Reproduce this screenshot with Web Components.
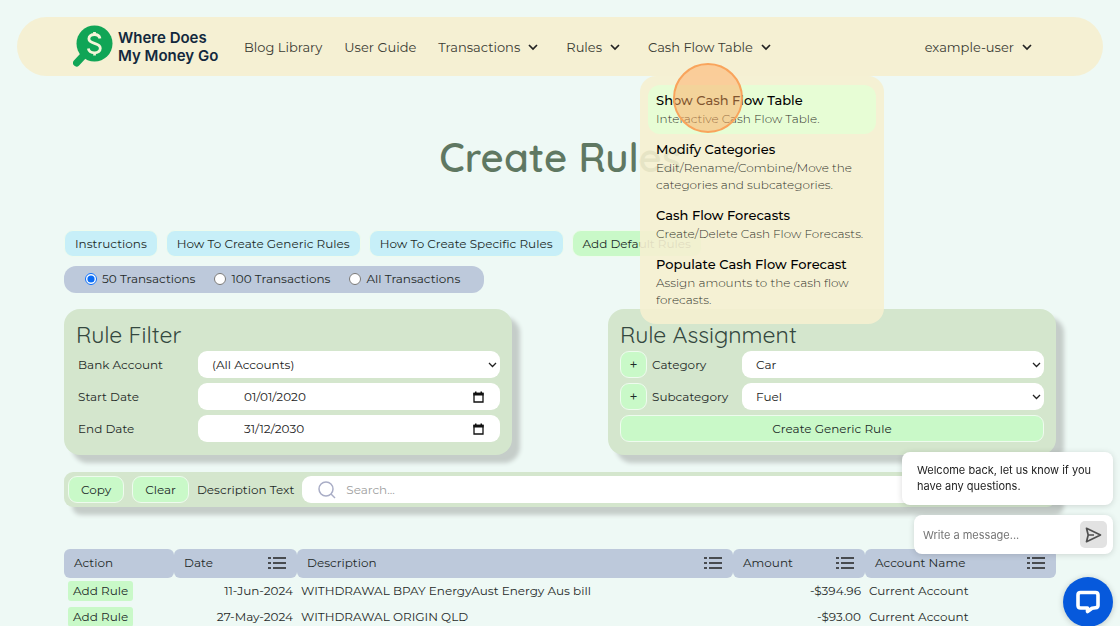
<!DOCTYPE html>
<html lang="en-AU">
<head>
<meta charset="utf-8">
<meta name="viewport" content="width=device-width, initial-scale=1">
<title>Create Rules</title>
<style>
  html { scrollbar-width: none; }
  body {
    margin: 0;
    background: #eef9f5;
    color: #1f2a28;
    font: 12px/20px Montserrat, Inter, "Open Sans", sans-serif;
  }
</style>
</head>
<body>
<rules-page></rules-page>

<template id="site-header">
  <style>
    :host { display: block; padding: 17px 17px 0; position: relative; z-index: 2; }
    header { display: flex; height: 59px; padding: 0 65px 0 56px; border-radius: 30px; background: #f5f0d3; }
    .logo { display: flex; align-items: center; gap: 5px; width: 171px; color: #12283d; text-decoration: none; font: 600 15px/18px Inter, sans-serif; white-space: nowrap; }
    .logo svg { flex: none; width: 40px; height: 43px; }
    nav { display: flex; flex: 1; gap: 22px; }
    .user { margin-left: auto; }
  </style>
  <header>
    <a class="logo" href="#">
      <svg viewBox="0 0 40 43" aria-hidden="true">
        <path d="M10 31 3.500 38" stroke="#10a556" stroke-width="7" stroke-linecap="round"/>
        <circle cx="21.500" cy="18.500" r="18" fill="#10a556"/>
        <path d="M27 13.500C26.300 10.500 24 9.500 21.500 9.500c-3.300 0-5.600 1.700-5.600 4.300 0 6 11.400 3.200 11.400 9.500 0 2.800-2.400 4.500-5.800 4.500-3.300 0-5.600-1.500-6.200-4.300M21.500 7v3M21.500 27v3.500" fill="none" stroke="#f5f5d8" stroke-width="2.800"/>
      </svg>
      <span>Where Does<br>My Money Go</span>
    </a>
    <nav>
      <nav-item>Blog Library</nav-item>
      <nav-item>User Guide</nav-item>
      <nav-item drop>Transactions</nav-item>
      <nav-item drop>Rules</nav-item>
      <nav-item drop>Cash Flow Table<cash-menu slot="menu"></cash-menu></nav-item>
      <nav-item drop class="user">example-user</nav-item>
    </nav>
  </header>
</template>

<template id="nav-item">
  <style>
    :host { display: flex; position: relative; align-items: stretch; }
    :host([drop]) { padding-right: 6px; }
    a, button { display: flex; align-items: center; gap: 8px; padding: 0; border: 0; background: none; color: #3b3c34; font: inherit; font-size: 13px; text-decoration: none; white-space: nowrap; cursor: pointer; }
    svg { width: 10px; height: 10px; fill: none; stroke: #222; stroke-width: 1.700; }
    ::slotted([slot=menu]) { position: absolute; top: 100%; left: -8px; }
  </style>
</template>

<template id="cash-menu">
  <style>
    :host { display: block; box-sizing: border-box; width: 244px; padding: 9px 8px; border-radius: 16px; background: rgba(245, 239, 208, .9); }
    .click { position: absolute; left: 33px; top: -13px; width: 70px; height: 70px; box-sizing: border-box; border: 2px solid #f9a45c; border-radius: 50%; background: rgba(255, 170, 95, .5); pointer-events: none; }
  </style>
  <menu-entry active><span slot="title">Show Cash Flow Table</span>Interactive Cash Flow Table.</menu-entry>
  <menu-entry><span slot="title">Modify Categories</span>Edit/Rename/Combine/Move the categories and subcategories.</menu-entry>
  <menu-entry><span slot="title">Cash Flow Forecasts</span>Create/Delete Cash Flow Forecasts.</menu-entry>
  <menu-entry><span slot="title">Populate Cash Flow Forecast</span>Assign amounts to the cash flow forecasts.</menu-entry>
  <div class="click"></div>
</template>

<template id="menu-entry">
  <style>
    :host { display: block; border-radius: 12px; }
    :host([active]) { background: #e7fdd5; }
    a { display: block; padding: 5px 8px 7px; color: #33342c; text-decoration: none; font-size: 12px; font-weight: 300; line-height: 17px; }
    strong { display: block; color: #000; font-size: 13px; font-weight: 500; line-height: 20px; }
  </style>
  <a href="#"><strong><slot name="title"></slot></strong><slot></slot></a>
</template>

<template id="ui-button">
  <style>
    :host { display: block; --bg: #c9f9c8; }
    :host([tone=info]) { --bg: #c7eff8; }
    button { box-sizing: border-box; width: 100%; height: 27px; padding: 0 var(--pad, 10px); border: 1px solid #eefbee; border-radius: 9px; background: var(--bg); color: #1d2b28; font: inherit; white-space: nowrap; cursor: pointer; }
    :host([square]) button { width: 27px; padding: 0; font-size: 14px; }
    :host([small]) button { display: block; width: auto; height: 20px; padding: 0 5px; border: 0; border-radius: 3px; line-height: 20px; }
  </style>
  <button type="button"><slot></slot></button>
</template>

<template id="rule-card">
  <style>
    :host { display: block; padding: 12px 12px 13px; border-radius: 16px; background: #d4e6cd; box-shadow: 8px 8px 4px #c5cdc9; }
    h2 { margin: 0 0 3px; color: #34483f; font-family: Quicksand, Inter, sans-serif; font-size: 23px; font-weight: 400; line-height: 27px; }
    .rows { display: grid; gap: 5px; }
  </style>
  <h2><slot name="title"></slot></h2>
  <div class="rows"><slot></slot></div>
</template>

<template id="field-row">
  <style>
    :host { display: grid; grid-template-columns: 122px 1fr; align-items: center; }
    .lead { display: flex; align-items: center; gap: 5px; padding-left: 2px; }
    :host([plus]) .lead { padding-left: 0; }
    .box { display: grid; grid-template-columns: 1fr auto; align-items: center; height: 27px; border-radius: 9px; background: #fff; }
    select, input { box-sizing: border-box; grid-area: 1 / 1 / 2 / 3; width: 100%; height: 27px; padding: 0 14px; border: 0; background: none; color: #222; font: inherit; appearance: none; }
    input { padding-left: 46px; }
    .arrow { grid-area: 1 / 2; width: 9px; height: 9px; margin-right: 3px; fill: none; stroke: #222; stroke-width: 1.300; pointer-events: none; }
    .cal { grid-area: 1 / 2; display: flex; margin-right: 16px; padding: 0; border: 0; background: none; }
    .cal svg { width: 11px; height: 12px; }
  </style>
</template>

<template id="search-bar">
  <style>
    :host { display: flex; align-items: center; gap: 8px; padding: 4px; border-radius: 9px; background: #d4e6cd; box-shadow: 8px 8px 4px #c5cdc9; --pad: 12px; }
    label { white-space: nowrap; }
    .box { display: flex; flex: 1; align-items: center; gap: 10px; height: 27px; padding-left: 16px; border-radius: 9px; background: #fff; }
    svg { width: 18px; height: 18px; fill: none; stroke: #a9adc6; stroke-width: 1.500; }
    input { flex: 1; height: 27px; padding: 0; border: 0; background: none; font: inherit; outline: 0; }
    input::placeholder { color: #a0a0a0; }
  </style>
  <ui-button>Copy</ui-button>
  <ui-button>Clear</ui-button>
  <label for="q">Description Text</label>
  <div class="box">
    <svg viewBox="0 0 18 18" aria-hidden="true"><circle cx="8" cy="8" r="7"/><path d="m13 13 4 4"/></svg>
    <input id="q" type="text" placeholder="Search...">
  </div>
</template>

<template id="transaction-table">
  <style>
    :host { display: block; }
    table { width: 100%; table-layout: fixed; border-collapse: separate; border-spacing: 0; }
    .c1 { width: 110px; } .c2 { width: 123px; } .c4 { width: 132px; } .c5 { width: 191px; }
    th { box-sizing: border-box; height: 29px; padding: 0 10px 2px; border-radius: 6px; background: #bdc9db; font-weight: 400; text-align: left; }
    th div { display: flex; align-items: center; justify-content: space-between; }
    th svg { width: 18px; height: 12px; margin-right: 1px; stroke: #222; stroke-width: 1.500; }
    td { height: 26px; padding: 0 4px; white-space: nowrap; }
    .num { text-align: right; }
  </style>
  <table>
    <colgroup><col class="c1"><col class="c2"><col><col class="c4"><col class="c5"></colgroup>
    <thead><tr></tr></thead>
    <tbody></tbody>
  </table>
</template>

<template id="chat-widget">
  <style>
    :host { position: fixed; right: 7px; top: 452px; z-index: 3; display: flex; flex-direction: column; align-items: flex-end; gap: 10px; color: #222; font: 11px/16px Inter, sans-serif; }
    p, form { box-sizing: border-box; margin: 0; border-radius: 8px; background: #fff; box-shadow: 0 1px 6px rgba(0, 0, 0, .15); }
    p { width: 211px; padding: 10px 14px 11px 15px; }
    form { display: flex; align-items: center; width: 199px; height: 39px; padding: 0 6px 0 9px; }
    input { flex: 1; min-width: 0; padding: 0; border: 0; font: inherit; }
    input::placeholder { color: #757575; }
    form button { display: grid; place-items: center; width: 27px; height: 27px; padding: 0; border: 0; border-radius: 5px; background: #e2e2e2; }
    .launch { display: grid; place-items: center; width: 50px; height: 50px; margin-top: 13px; padding: 0; border: 0; border-radius: 50%; background: #0659dc; box-shadow: 0 1px 6px rgba(0, 0, 0, .2); }
    svg { fill: none; stroke-linejoin: round; }
  </style>
  <p>Welcome back, let us know if you have any questions.</p>
  <form>
    <input type="text" aria-label="Message" placeholder="Write a message...">
    <button type="button" aria-label="Send"><svg width="17" height="16" viewBox="0 0 17 16" stroke="#505050" stroke-width="1.700"><path d="M1.500 1.300 15.500 8 1.500 14.700 3.200 8ZM3.200 8H9"/></svg></button>
  </form>
  <button class="launch" type="button" aria-label="Open chat"><svg width="26" height="26" viewBox="0 0 26 26" stroke="#fff" stroke-width="3.600"><path d="M5.500 3.500H20.500Q23 3.500 23 6V16.500Q23 18.500 20.500 18.800L17 19.200 12.500 22.500V19H5.500Q3 19 3 16.500V6Q3 3.500 5.500 3.500Z"/></svg></button>
</template>

<template id="rules-page">
  <style>
    :host { display: block; }
    main { padding: 0 64px; }
    h1 { margin: 57px 0 48px; color: #5f7862; font-family: Quicksand, Inter, sans-serif; font-size: 40px; font-weight: 600; line-height: 49px; text-align: center; }
    .actions { display: flex; gap: 8px; }
    fieldset { display: flex; width: fit-content; gap: 19px; margin: 9px 0 16px; padding: 3px 24px 4px 21px; border: 0; border-radius: 12px; background: #bdc9db; }
    label { display: flex; align-items: center; gap: 5px; }
    input { width: 12px; height: 12px; margin: 0; accent-color: #0b6cf5; }
    .cards { display: grid; grid-template-columns: 1fr 1fr; gap: 96px; margin-bottom: 17px; }
    search-bar { margin-bottom: 42px; }
  </style>
  <site-header></site-header>
  <main>
    <h1>Create Rules</h1>
    <div class="actions">
      <ui-button tone="info">Instructions</ui-button>
      <ui-button tone="info">How To Create Generic Rules</ui-button>
      <ui-button tone="info">How To Create Specific Rules</ui-button>
      <ui-button>Add Default Rules</ui-button>
    </div>
    <fieldset aria-label="Transactions shown">
      <label><input type="radio" name="n" checked>50 Transactions</label>
      <label><input type="radio" name="n">100 Transactions</label>
      <label><input type="radio" name="n">All Transactions</label>
    </fieldset>
    <div class="cards">
      <rule-card>
        <span slot="title">Rule Filter</span>
        <field-row label="Bank Account" value="(All Accounts)"></field-row>
        <field-row date label="Start Date" value="01/01/2020"></field-row>
        <field-row date label="End Date" value="31/12/2030"></field-row>
      </rule-card>
      <rule-card>
        <span slot="title">Rule Assignment</span>
        <field-row plus label="Category" value="Car"></field-row>
        <field-row plus label="Subcategory" value="Fuel"></field-row>
        <ui-button>Create Generic Rule</ui-button>
      </rule-card>
    </div>
    <search-bar></search-bar>
    <transaction-table></transaction-table>
  </main>
  <chat-widget></chat-widget>
</template>

<script>
  class Base extends HTMLElement {
    constructor() {
      super();
      this.attachShadow({ mode: 'open' })
        .append(document.getElementById(this.localName).content.cloneNode(true));
    }
  }

  customElements.define('ui-button', class extends Base {});
  customElements.define('menu-entry', class extends Base {});
  customElements.define('cash-menu', class extends Base {});

  customElements.define('nav-item', class extends Base {
    connectedCallback() {
      const html = this.hasAttribute('drop')
        ? '<button type="button"><slot></slot><svg viewBox="0 0 10 10" aria-hidden="true"><path d="m1 3 4 4 4-4"/></svg></button><slot name="menu"></slot>'
        : '<a href="#"><slot></slot></a>';
      this.shadowRoot.querySelector('style').insertAdjacentHTML('afterend', html);
    }
  });

  customElements.define('site-header', class extends Base {});
  customElements.define('rule-card', class extends Base {});

  customElements.define('field-row', class extends Base {
    connectedCallback() {
      const label = this.getAttribute('label');
      const value = this.getAttribute('value');
      const plus = this.hasAttribute('plus') ? '<ui-button square>+</ui-button>' : '';
      const control = this.hasAttribute('date')
        ? `<input id="f" type="text" value="${value}"><button class="cal" type="button" aria-label="Pick a date"><svg viewBox="0 0 11 12"><path d="M1 2.500h9v8.500H1Z" fill="none" stroke="#111" stroke-width="1.300"/><path d="M.4 1.800h10.200v2.700H.4ZM2 .5h1.500V2H2ZM7.500.5H9V2H7.500Z" fill="#111"/></svg></button>`
        : `<select id="f"><option>${value}</option></select><svg class="arrow" viewBox="0 0 9 9" aria-hidden="true"><path d="m1 3 3.500 3.500L8 3"/></svg>`;
      this.shadowRoot.querySelector('style').insertAdjacentHTML('afterend',
        `<div class="lead">${plus}<label for="f">${label}</label></div><div class="box">${control}</div>`);
    }
  });

  customElements.define('search-bar', class extends Base {});

  customElements.define('transaction-table', class extends Base {
    connectedCallback() {
      const icon = '<svg viewBox="0 0 18 12" aria-hidden="true"><path d="M0 1h3M5 1h13M0 6h3M5 6h13M0 11h3M5 11h13"/></svg>';
      const heads = ['Action', 'Date', 'Description', 'Amount', 'Account Name'];
      const rows = [
        ['11-Jun-2024', 'WITHDRAWAL BPAY EnergyAust Energy Aus bill', '-$394.96', 'Current Account'],
        ['27-May-2024', 'WITHDRAWAL ORIGIN QLD', '-$93.00', 'Current Account'],
      ];
      this.shadowRoot.querySelector('thead tr').innerHTML =
        heads.map((h, i) => `<th scope="col"><div>${h}${i ? icon : ''}</div></th>`).join('');
      this.shadowRoot.querySelector('tbody').innerHTML = rows.map(([date, text, amount, account]) =>
        `<tr><td><ui-button small>Add Rule</ui-button></td><td class="num">${date}</td><td>${text}</td><td class="num">${amount}</td><td>${account}</td></tr>`).join('');
    }
  });

  customElements.define('chat-widget', class extends Base {});
  customElements.define('rules-page', class extends Base {});
</script>
</body>
</html>
